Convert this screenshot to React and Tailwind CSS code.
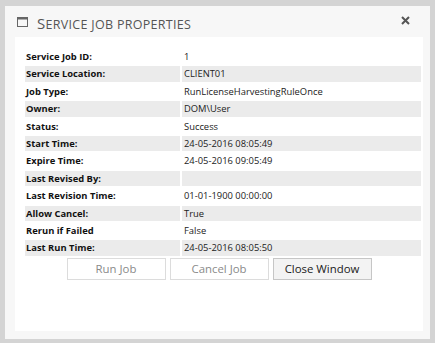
const rows = [
  ["Service Job ID:", "1"],
  ["Service Location:", "CLIENT01"],
  ["Job Type:", "RunLicenseHarvestingRuleOnce"],
  ["Owner:", "DOM\\User"],
  ["Status:", "Success"],
  ["Start Time:", "24-05-2016 08:05:49"],
  ["Expire Time:", "24-05-2016 09:05:49"],
  ["Last Revised By:", ""],
  ["Last Revision Time:", "01-01-1900 00:00:00"],
  ["Allow Cancel:", "True"],
  ["Rerun if Failed", "False"],
  ["Last Run Time:", "24-05-2016 08:05:50"],
];

const WindowIcon = () => (
  <svg width="11" height="10" viewBox="0 0 11 10" className="shrink-0">
    <rect x="0.5" y="0.5" width="10" height="9" fill="none" stroke="#666" />
    <rect x="0.5" y="0.5" width="10" height="2" fill="#666" />
  </svg>
);

const CloseIcon = () => (
  <svg width="9" height="9" viewBox="0 0 9 9">
    <path d="M1 1 L8 8 M8 1 L1 8" stroke="#555" strokeWidth="2" />
  </svg>
);

export default function App() {
  return (
    <div className="w-[435px] h-[343px] bg-[#d4d4d4] pt-[6px] pl-[5px] font-['Open_Sans',sans-serif]">
      <div className="w-[425px] h-[333px] bg-[#f7f7f7] flex flex-col">
        <div className="h-[31px] flex items-center pl-[12px] pr-[20px]">
          <WindowIcon />
          <span className="ml-[9px] mt-[3px] leading-none text-[#555] uppercase tracking-[0.3px]">
            <span className="text-[15px]">S</span>
            <span className="text-[12.5px]">ervice job properties</span>
          </span>
          <div className="ml-auto -mt-[3px]">
            <CloseIcon />
          </div>
        </div>
        <div className="ml-[10px] w-[408px] h-[294px] bg-white">
          <table className="ml-[8px] mt-[10px] w-[400px] border-separate border-spacing-[2px] text-[9.4px]">
            <tbody>
              {rows.map(([label, value], i) => (
                <tr key={label} className={i % 2 === 1 ? "bg-[#ebebeb]" : ""}>
                  <td className="w-[155px] h-[15.4px] p-0 pl-[1px] leading-[15.4px] font-bold text-[#111]">
                    {label}
                  </td>
                  <td className="h-[15.4px] p-0 pl-[2px] leading-[15.4px] text-[#222]">{value}</td>
                </tr>
              ))}
            </tbody>
          </table>
          <div className="flex justify-center gap-[4px]">
            <button className="w-[99px] h-[22px] border border-[#dcdcdc] bg-white text-[11.4px] text-[#8a8a8a]">
              Run Job
            </button>
            <button className="w-[99px] h-[22px] border border-[#dcdcdc] bg-white text-[11.4px] text-[#8a8a8a]">
              Cancel Job
            </button>
            <button className="w-[99px] h-[22px] border border-[#c6c6c6] bg-[#f3f3f3] text-[11.4px] text-[#1a1a1a]">
              Close Window
            </button>
          </div>
        </div>
      </div>
    </div>
  );
}
